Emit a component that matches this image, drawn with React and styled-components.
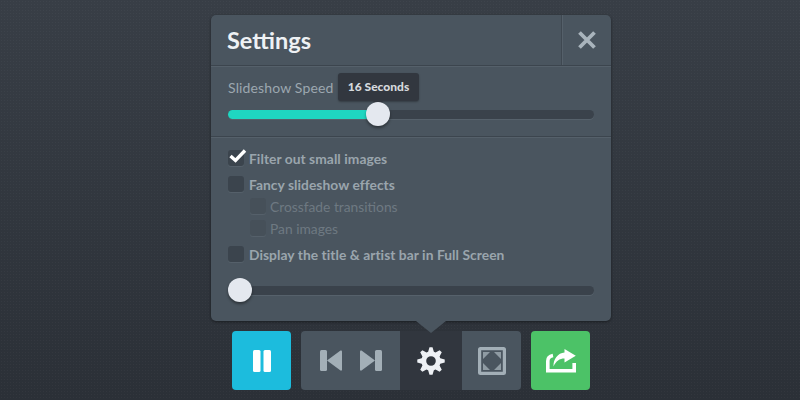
import styled, { createGlobalStyle } from "styled-components";

const GlobalStyle = createGlobalStyle`
    html, body {
        margin: 0;
        height: 100%;
    }
    body {
        font-family: "Lato", "Open Sans", sans-serif;
        overflow: hidden;
    }
`;

// 8 tooth gear, outline worked out from the angle of each tooth
const gearPath = () => {
    const c = 14;
    let d = "";
    for (let i = 0; i < 8; i++) {
        const a = (i * Math.PI) / 4 - Math.PI / 2;
        const pts = [
            [9.7, a - 0.3],
            [13.8, a - 0.11],
            [13.8, a + 0.11],
            [9.7, a + 0.3],
        ];
        pts.forEach(([r, t], j) => {
            const x = (c + r * Math.cos(t)).toFixed(2);
            const y = (c + r * Math.sin(t)).toFixed(2);
            d += `${i === 0 && j === 0 ? "M" : "L"}${x} ${y} `;
        });
    }
    return d + "Z M14 9.2 A4.8 4.8 0 1 0 14 18.8 A4.8 4.8 0 1 0 14 9.2 Z";
};

const App = () => {
    return (
        <Page>
            <GlobalStyle />
            <Panel>
                <Header>
                    <Title>Settings</Title>
                    <CloseBtn>
                        <svg width="18" height="18" viewBox="0 0 18 18">
                            <path d="M1.5 1.5 L16.5 16.5 M16.5 1.5 L1.5 16.5" stroke="#a9b4bc" strokeWidth="3.8" />
                        </svg>
                    </CloseBtn>
                </Header>
                <SpeedSection>
                    <Label>Slideshow Speed</Label>
                    <Tooltip>16 Seconds</Tooltip>
                    <Slider>
                        <Fill percent={41} />
                        <Knob percent={41} />
                    </Slider>
                </SpeedSection>
                <Options>
                    <Option>
                        <Box>
                            <Check width="18" height="14" viewBox="0 0 18 14">
                                <path d="M1.5 7 L6.5 11.5 L16 1.5" fill="none" stroke="#fff" strokeWidth="3.4" />
                            </Check>
                        </Box>
                        <OptionText>Filter out small images</OptionText>
                    </Option>
                    <Option spaced>
                        <Box />
                        <OptionText>Fancy slideshow effects</OptionText>
                    </Option>
                    <SubOption>
                        <Box faded />
                        <OptionText faded>Crossfade transitions</OptionText>
                    </SubOption>
                    <SubOption>
                        <Box faded />
                        <OptionText faded>Pan images</OptionText>
                    </SubOption>
                    <Option spaced>
                        <Box />
                        <OptionText>Display the title &amp; artist bar in Full Screen</OptionText>
                    </Option>
                </Options>
                <BottomSlider>
                    <Slider>
                        <Knob percent={0} />
                    </Slider>
                </BottomSlider>
                <Caret />
            </Panel>
            <Toolbar>
                <PauseBtn>
                    <svg width="18" height="22" viewBox="0 0 18 22">
                        <rect x="0" y="0" width="7.5" height="22" rx="1.5" fill="#fff" />
                        <rect x="10.5" y="0" width="7.5" height="22" rx="1.5" fill="#fff" />
                    </svg>
                </PauseBtn>
                <Group>
                    <TrackBtns>
                        <svg width="22" height="21" viewBox="0 0 22 21">
                            <rect x="0" y="0" width="7" height="21" rx="1.5" fill="#a3afb7" />
                            <path d="M7 10.5 L20.5 0.5 Q22 0 22 1.5 L22 19.5 Q22 21 20.5 20.5 Z" fill="#a3afb7" />
                        </svg>
                        <svg width="22" height="21" viewBox="0 0 22 21">
                            <rect x="15" y="0" width="7" height="21" rx="1.5" fill="#a3afb7" />
                            <path d="M15 10.5 L1.5 0.5 Q0 0 0 1.5 L0 19.5 Q0 21 1.5 20.5 Z" fill="#a3afb7" />
                        </svg>
                    </TrackBtns>
                    <GearBtn>
                        <svg width="28" height="28" viewBox="0 0 28 28">
                            <path fillRule="evenodd" fill="#eef1f5" d={gearPath()} />
                        </svg>
                    </GearBtn>
                    <FullBtn>
                        <svg width="28" height="28" viewBox="0 0 28 28">
                            <path
                                fillRule="evenodd"
                                fill="#a3afb7"
                                d="M2.5 0 H25.5 Q28 0 28 2.5 V25.5 Q28 28 25.5 28 H2.5 Q0 28 0 25.5 V2.5 Q0 0 2.5 0 Z M3.2 3.2 V24.8 H24.8 V3.2 Z"
                            />
                            <path d="M5 5 H12 L5 12 Z M23 5 V12 L16 5 Z M5 23 V16 L12 23 Z M23 23 H16 L23 16 Z" fill="#8f9ba3" />
                        </svg>
                    </FullBtn>
                </Group>
                <ShareBtn>
                    <svg width="30" height="24" viewBox="0 0 30 24">
                        <path
                            d="M1.8 12 Q1.8 7.5 7 6.5 M1.8 12 V21.8 H28.2 V14"
                            fill="none"
                            stroke="#fff"
                            strokeWidth="3.6"
                        />
                        <path d="M18.5 0 L29.8 6.8 L18.5 13.5 V9.5 C13.5 9.5 10 12 7.5 17.5 C7 10 12 4 18.5 3.5 Z" fill="#fff" />
                    </svg>
                </ShareBtn>
            </Toolbar>
        </Page>
    );
};

export default App;

const Page = styled.div`
    width: 800px;
    height: 400px;
    box-sizing: border-box;
    padding: 15px 0 0 22px;
    display: flex;
    flex-direction: column;
    align-items: center;
    background-color: #31363e;
    background-image:
        radial-gradient(rgba(255, 255, 255, 0.03) 1px, transparent 1px),
        linear-gradient(#383e46, #2b3037);
    background-size: 3px 3px, 100% 100%;
`;

const Panel = styled.div`
    position: relative;
    width: 400px;
    height: 306px;
    background: #4a555f;
    border-radius: 5px;
    box-shadow: 0 1px 3px rgba(0, 0, 0, 0.45);
`;

const Header = styled.div`
    height: 50px;
    display: flex;
    align-items: stretch;
    justify-content: space-between;
    border-bottom: 1px solid #3c454e;
    box-shadow: 0 1px 0 #55606a;
`;

const Title = styled.div`
    padding: 11px 0 0 16px;
    font-size: 23.5px;
    line-height: 29px;
    font-weight: 700;
    color: #eef1f4;
`;

const CloseBtn = styled.div`
    width: 49px;
    display: flex;
    align-items: center;
    justify-content: center;
    border-left: 1px solid #3f4851;
    box-shadow: inset 1px 0 0 #55606a;
`;

const SpeedSection = styled.div`
    position: relative;
    height: 71px;
    box-sizing: border-box;
    padding: 44px 17px 0;
    border-bottom: 1px solid #3c454e;
    box-shadow: 0 1px 0 #55606a;
`;

const Label = styled.div`
    position: absolute;
    left: 17px;
    top: 13px;
    font-size: 14px;
    font-weight: 400;
    letter-spacing: 0.15px;
    color: #9ca7af;
`;

const Tooltip = styled.div`
    position: absolute;
    left: 127px;
    top: 7px;
    width: 81px;
    height: 28px;
    line-height: 27px;
    text-align: center;
    font-size: 12px;
    font-weight: 900;
    color: #d5d9dd;
    background: #32373f;
    border-radius: 3px;
    box-shadow: 0 1px 2px rgba(0, 0, 0, 0.3);

    &::after {
        content: "";
        position: absolute;
        left: 35px;
        bottom: -5px;
        border-left: 5px solid transparent;
        border-right: 5px solid transparent;
        border-top: 5px solid #32373f;
    }
`;

const Slider = styled.div`
    position: relative;
    height: 9px;
    background: #3a424b;
    border-radius: 5px;
    box-shadow: 0 1px 0 #56616b;
`;

const Fill = styled.div`
    width: ${(p) => p.percent}%;
    height: 100%;
    background: #1fd6c1;
    border-radius: 5px 0 0 5px;
`;

const Knob = styled.div`
    position: absolute;
    top: -8px;
    left: ${(p) => (p.percent ? `calc(${p.percent}% - 12px)` : "0")};
    width: 24px;
    height: 24px;
    border-radius: 50%;
    background: #e4e8ef;
    box-shadow: 0 2px 3px rgba(0, 0, 0, 0.4);
`;

const Options = styled.div`
    padding: 13px 17px 0;
    display: flex;
    flex-direction: column;
`;

const Option = styled.div`
    display: flex;
    align-items: center;
    gap: 5px;
    height: 16px;
    margin-top: ${(p) => (p.spaced ? "10px" : "0")};
`;

const SubOption = styled(Option)`
    margin-top: 6px;
    padding-left: 22px;
    gap: 4px;
`;

const Box = styled.div`
    position: relative;
    flex: none;
    width: 16px;
    height: 16px;
    border-radius: 3px;
    background: ${(p) => (p.faded ? "#465059" : "#3b444d")};
    box-shadow: 0 1px 0 #55606a;
`;

const Check = styled.svg`
    position: absolute;
    left: 1px;
    top: -1px;
`;

const OptionText = styled.span`
    font-size: 13.8px;
    font-weight: ${(p) => (p.faded ? 400 : 700)};
    letter-spacing: ${(p) => (p.faded ? "0" : "0.05px")};
    white-space: nowrap;
    color: ${(p) => (p.faded ? "#6e7982" : "#9aa5ad")};
`;

const BottomSlider = styled.div`
    padding: 24px 17px 0;
`;

const Caret = styled.div`
    position: absolute;
    left: 205px;
    bottom: -12px;
    border-left: 15px solid transparent;
    border-right: 15px solid transparent;
    border-top: 12px solid #4a555f;
`;

const Toolbar = styled.div`
    display: flex;
    gap: 10px;
    margin-top: 10px;
    height: 59px;
`;

const SquareBtn = styled.div`
    width: 59px;
    display: flex;
    align-items: center;
    justify-content: center;
    border-radius: 4px;
`;

const PauseBtn = styled(SquareBtn)`
    background: #1cbcdd;
`;

const ShareBtn = styled(SquareBtn)`
    background: #4cc267;
`;

const Group = styled.div`
    width: 220px;
    display: flex;
    border-radius: 4px;
    overflow: hidden;
    background: #4a555f;
`;

const TrackBtns = styled.div`
    width: 99px;
    display: flex;
    align-items: center;
    justify-content: center;
    gap: 18px;
`;

const GearBtn = styled.div`
    width: 62px;
    display: flex;
    align-items: center;
    justify-content: center;
    background: #31363e;
`;

const FullBtn = styled.div`
    flex: 1;
    display: flex;
    align-items: center;
    justify-content: center;
`;
